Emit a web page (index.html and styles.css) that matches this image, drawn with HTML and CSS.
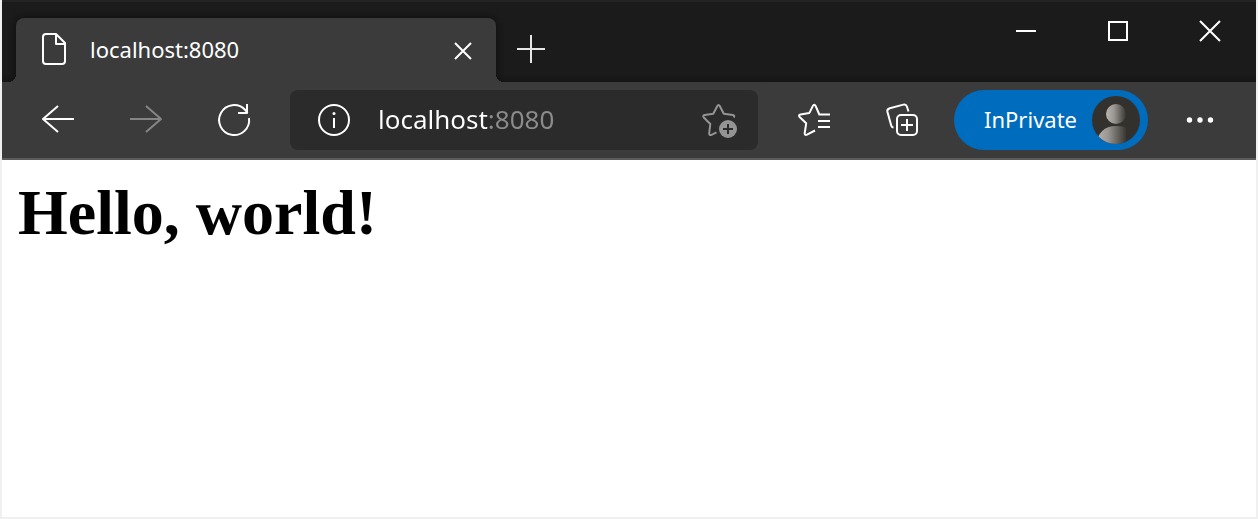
FILE: index.html
```html
<!DOCTYPE html>
<html lang="en">
<head>
<meta charset="utf-8">
<title>localhost:8080</title>
<link rel="stylesheet" href="styles.css">
</head>
<body>
<div class="window">
  <header class="titlebar">
    <div class="tab">
      <svg class="icon" width="24" height="32" viewBox="0 0 24 32"><path d="M4 1h10l9 9v18a3 3 0 0 1-3 3H4a3 3 0 0 1-3-3V4a3 3 0 0 1 3-3zM14 1v10h9"/></svg>
      <span class="tab-title">localhost:8080</span>
      <button class="tab-close" aria-label="Close tab"><svg class="icon" width="18" height="18" viewBox="0 0 18 18"><path d="M1 1l16 16M17 1L1 17"/></svg></button>
    </div>
    <button class="new-tab" aria-label="New tab"><svg class="icon soft" width="28" height="28" viewBox="0 0 28 28"><path d="M14 0v28M0 14h28"/></svg></button>
    <div class="controls">
      <button class="control" aria-label="Minimize"><svg class="icon" width="20" height="20" viewBox="0 0 20 20"><path d="M0 10h20"/></svg></button>
      <button class="control" aria-label="Maximize"><svg class="icon" width="20" height="20" viewBox="0 0 20 20"><path stroke-linejoin="miter" d="M1 1h18v18H1z"/></svg></button>
      <button class="control" aria-label="Close"><svg class="icon" width="20" height="20" viewBox="0 0 20 20"><path d="M0 0l20 20M20 0L0 20"/></svg></button>
    </div>
  </header>
  <nav class="toolbar">
    <button class="tool" aria-label="Back"><svg class="icon" width="32" height="32" viewBox="0 0 32 32"><path d="M32 15H1M16 2L1 15l15 13"/></svg></button>
    <button class="tool disabled" aria-label="Forward" disabled><svg class="icon" width="32" height="32" viewBox="0 0 32 32"><path d="M0 15h31M16 2l15 13-15 13"/></svg></button>
    <button class="tool" aria-label="Refresh"><svg class="icon" width="32" height="32" viewBox="0 0 32 32"><path d="M31 14a15 15 0 1 1-4-8.300l2.500 3.300M20 9h9V0"/></svg></button>
    <div class="address">
      <button class="site-info" aria-label="Site information"><svg class="icon" width="32" height="32" viewBox="0 0 32 32"><circle cx="16" cy="16" r="15"/><path d="M16 14v10"/><circle class="solid" cx="16" cy="9.500" r="1.500"/></svg></button>
      <input class="url" type="text" value="localhost:8080" aria-label="Address">
      <button class="favorite" aria-label="Add to favorites"><svg class="icon" width="36" height="36" viewBox="0 -1 36 36"><path d="M14.500 29.300l-5 2.500c-1.500.7-2.500 0-2.300-1.600l1.100-9.200-6.500-6.500c-1-1.200-.6-2.400.9-2.600l8.600-1.200 3.900-7.500c.8-1.500 1.900-1.500 2.700 0l3.900 7.500 9 1.200c1.500.2 1.900 1.400.9 2.600"/><circle class="solid" cx="26" cy="26" r="9"/><path class="cut" d="M26 21v10M21 26h10"/></svg></button>
    </div>
    <button class="tool" aria-label="Favorites"><svg class="icon" width="32" height="32" viewBox="0 0 32 32"><path d="M17 26.500L9 30.600c-1.500.7-2.500 0-2.300-1.600L8.200 19.300 1.600 13c-1-1.200-.6-2.400.9-2.600l8.800-1.300 3.600-7.200c.8-1.500 1.900-1.500 2.700 0L21.300 10.500H32M20 17h12M20 23h12"/></svg></button>
    <button class="tool" aria-label="Collections"><svg class="icon" width="32" height="34" viewBox="0 0 32 34"><path d="M22.500 8.500l-1.600-5c-.6-1.700-1.800-2.300-3.500-1.900L3.800 5.200C2 5.700 1 7 1.400 8.800l3.800 13.700c.3 1.100 1 1.900 2.300 2.100"/><rect x="11" y="12" width="20" height="20" rx="4"/><path d="M21 16v12M15 22h12"/></svg></button>
    <button class="profile">
      <span class="profile-name">InPrivate</span>
      <svg class="avatar" width="48" height="48" viewBox="0 0 48 48">
        <defs>
          <linearGradient id="shade"><stop offset="0" stop-color="#b8b4b0"/><stop offset=".4" stop-color="#9a9793"/><stop offset="1" stop-color="#393732"/></linearGradient>
          <clipPath id="round"><circle cx="24" cy="24" r="24"/></clipPath>
        </defs>
        <g clip-path="url(#round)"><path fill="#33312d" d="M0 0h48v48H0z"/><circle cx="24" cy="18" r="10" fill="url(#shade)"/><path d="M4 48c2-11 8-18 20-18 6 0 9 1 10 2v16z" fill="url(#shade)"/></g>
      </svg>
    </button>
    <button class="tool" aria-label="Settings and more"><svg class="icon" width="28" height="6" viewBox="0 0 28 6"><circle class="solid" cx="3.500" cy="3" r="2.700"/><circle class="solid" cx="14" cy="3" r="2.700"/><circle class="solid" cx="24.500" cy="3" r="2.700"/></svg></button>
  </nav>
  <main class="page">
    <h1 class="heading">Hello, world!</h1>
  </main>
</div>
</body>
</html>
```
FILE: styles.css
```css
* { box-sizing: border-box; }

body {
  margin: 0;
  font-family: "Noto Sans", "Open Sans", sans-serif;
  color: #fff;
}

button {
  display: flex;
  align-items: center;
  justify-content: center;
  padding: 0;
  border: 0;
  background: none;
  color: inherit;
  font: inherit;
}

.window {
  display: flex;
  flex-direction: column;
  min-height: 100vh;
  border: 2px solid #f0f0f0;
  border-top: 0;
  background: #fff;
}

.icon {
  flex: none;
  overflow: visible;
  fill: none;
  stroke: currentColor;
  stroke-width: 2;
  stroke-linejoin: round;
}

.icon.soft { color: #e6e6e6; }
.icon .solid { fill: currentColor; stroke: none; }
.icon .cut { stroke: #2b2b2b; }

.titlebar {
  display: flex;
  height: 82px;
  padding-left: 14px;
  border-top: 2px solid #232323;
  background: linear-gradient(#1b1b1b 72px, #151515);
}

.tab {
  position: relative;
  display: flex;
  align-items: center;
  width: 480px;
  margin-top: 16px;
  padding: 0 24px 2px 26px;
  border-radius: 8px 8px 0 0;
  background: #3b3b3b;
  box-shadow: 0 0 6px #0c0c0c;
}

.tab::before,
.tab::after {
  content: "";
  position: absolute;
  bottom: 0;
  width: 8px;
  height: 8px;
}

.tab::before {
  right: 100%;
  background: radial-gradient(circle at 0 0, transparent 8px, #3b3b3b 8px);
}

.tab::after {
  left: 100%;
  background: radial-gradient(circle at 100% 0, transparent 8px, #3b3b3b 8px);
}

.tab-title {
  flex: 1;
  margin-left: 24px;
  font-size: 22px;
  line-height: 32px;
}

.tab-close { height: 32px; margin-top: 4px; }

.new-tab {
  width: 70px;
  height: 62px;
  margin-top: 16px;
}

.controls {
  display: flex;
  height: 58px;
  margin-left: auto;
}

.control { width: 92px; }

.toolbar {
  position: relative;
  display: flex;
  align-items: center;
  height: 78px;
  padding: 0 12px;
  border-bottom: 2px solid #5b5b5b;
  background: #3b3b3b;
}

.tool { width: 88px; height: 60px; }
.tool.disabled { color: #858585; }

.address {
  display: flex;
  flex: 1;
  align-items: center;
  height: 60px;
  min-width: 0;
  margin: 0 12px;
  padding: 0 20px 0 28px;
  border-radius: 8px;
  background: #2b2b2b;
}

.url {
  flex: 1;
  min-width: 0;
  height: 40px;
  margin-left: 28px;
  padding: 0 0 2px;
  border: 0;
  outline: 0;
  background: linear-gradient(90deg, #fff 111px, #8c8c8c 111px);
  background-clip: text;
  color: transparent;
  font: 26px/38px "Noto Sans", "Open Sans", sans-serif;
}

.favorite { color: #949494; }

.profile {
  justify-content: space-between;
  width: 194px;
  height: 60px;
  margin: 0 8px;
  padding: 0 8px 0 30px;
  border-radius: 30px;
  background: #006cbe;
  font-size: 22px;
}

.profile-name { padding-bottom: 2px; }

.page {
  flex: 1;
  padding: 16px;
  color: #000;
}

.heading {
  margin: 0;
  font: bold 64px/74px "Liberation Serif", "Times New Roman", serif;
}
```
